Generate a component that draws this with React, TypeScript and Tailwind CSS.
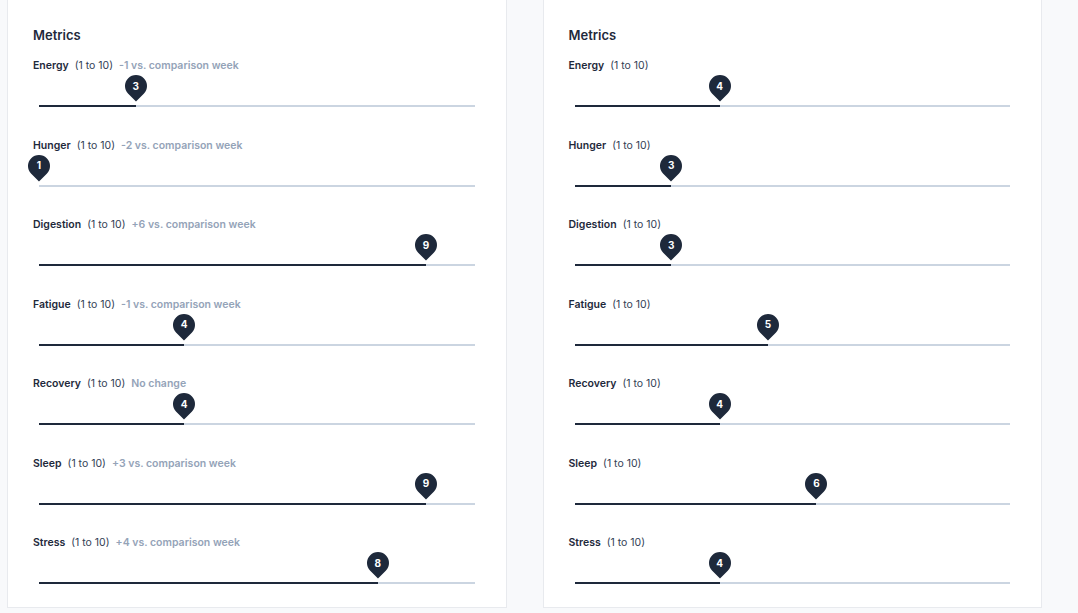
import React from 'react';

type Metric = {
  name: string;
  value: number;
  delta?: string;
};

const leftMetrics: Metric[] = [
  { name: 'Energy', value: 3, delta: '-1 vs. comparison week' },
  { name: 'Hunger', value: 1, delta: '-2 vs. comparison week' },
  { name: 'Digestion', value: 9, delta: '+6 vs. comparison week' },
  { name: 'Fatigue', value: 4, delta: '-1 vs. comparison week' },
  { name: 'Recovery', value: 4, delta: 'No change' },
  { name: 'Sleep', value: 9, delta: '+3 vs. comparison week' },
  { name: 'Stress', value: 8, delta: '+4 vs. comparison week' },
];

const rightMetrics: Metric[] = [
  { name: 'Energy', value: 4 },
  { name: 'Hunger', value: 3 },
  { name: 'Digestion', value: 3 },
  { name: 'Fatigue', value: 5 },
  { name: 'Recovery', value: 4 },
  { name: 'Sleep', value: 6 },
  { name: 'Stress', value: 4 },
];

const MetricSlider = ({ metric }: { metric: Metric }) => {
  const pct = ((metric.value - 1) / 9) * 100;
  return (
    <div className="h-[79.5px]">
      {/* Label */}
      <div className="flex items-center h-4 text-[10.5px] leading-4 text-[#1e293b]">
        <span className="font-semibold">{metric.name}</span>
        <span className="ml-[6px] text-[#334155]">(1 to 10)</span>
        {metric.delta && (
          <span className="ml-[6px] font-semibold text-[#94a3b8]">{metric.delta}</span>
        )}
      </div>

      {/* Track */}
      <div className="px-[6px]">
        <div className="relative h-[40px]">
          <div className="absolute left-0 right-0 top-[31px] h-[2px] bg-[#cbd5e1]" />
          <div
            className="absolute left-0 top-[31px] h-[2px] bg-[#1e293b]"
            style={{ width: `${pct}%` }}
          />
          <div
            className="absolute top-[1px] w-[22px] h-[22px] -translate-x-1/2"
            style={{ left: `${pct}%` }}
          >
            <div className="absolute inset-0 rotate-45 rounded-tl-full rounded-tr-full rounded-bl-full bg-[#1e293b]" />
            <span className="relative flex h-full w-full items-center justify-center text-[10px] font-bold text-white">
              {metric.value}
            </span>
          </div>
        </div>
      </div>
    </div>
  );
};

const MetricsCard = ({ metrics }: { metrics: Metric[] }) => {
  return (
    <div className="bg-white border-x border-b border-[#e8eaee] px-[25px] pt-[25px] h-[608px]">
      <h2 className="text-[13px] leading-5 font-semibold text-[#1e293b]">Metrics</h2>
      <div className="mt-[13px]">
        {metrics.map((m) => (
          <MetricSlider key={m.name} metric={m} />
        ))}
      </div>
    </div>
  );
};

export default function App() {
  return (
    <div
      className="bg-[#f8f9fb] pl-[7px] w-[1078px] h-[613px] overflow-hidden"
      style={{ fontFamily: 'Inter, "Noto Sans", sans-serif' }}
    >
      <div className="grid grid-cols-2 gap-[36px] w-[1035px]">
        <MetricsCard metrics={leftMetrics} />
        <MetricsCard metrics={rightMetrics} />
      </div>
    </div>
  );
}
